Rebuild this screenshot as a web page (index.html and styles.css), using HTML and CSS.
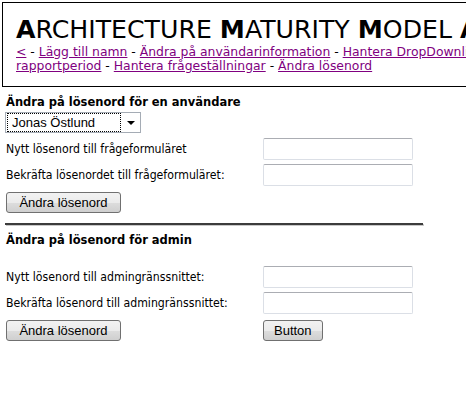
FILE: index.html
```html
<!DOCTYPE html>
<html lang="sv">
<head>
    <meta charset="UTF-8">
    <title>Ändra lösenord</title>
    <link rel="stylesheet" href="styles.css">
</head>
<body>
    <div class="header">
        <h1 class="title"><b>A</b>RCHITECTURE <b>M</b>ATURITY <b>M</b>ODEL <b>A</b>SSESSMENT</h1>
        <div class="menu">
            <a href="#">&lt;</a> - <a href="#">Lägg till namn</a> - <a href="#">Ändra på användarinformation</a> - <a href="#">Hantera DropDownlistor</a> - <a href="#">Hantera<br>rapportperiod</a> - <a href="#">Hantera frågeställningar</a> - <a href="#">Ändra lösenord</a>
        </div>
    </div>

    <div class="content">
        <h2 class="section-title first">Ändra på lösenord för en användare</h2>
        <div class="select">
            <span class="select-value">Jonas Östlund</span>
            <span class="select-arrow"></span>
        </div>
        <div class="form-grid">
            <label>Nytt lösenord till frågeformuläret</label>
            <input type="password" class="textbox">
            <label>Bekräfta lösenordet till frågeformuläret:</label>
            <input type="password" class="textbox">
        </div>
        <button type="button" class="btn btn-wide single">Ändra lösenord</button>

        <div class="divider"></div>

        <h2 class="section-title second">Ändra på lösenord för admin</h2>
        <div class="form-grid admin">
            <label>Nytt lösenord till admingränssnittet:</label>
            <input type="password" class="textbox">
            <label>Bekräfta lösenord till admingränssnittet:</label>
            <input type="password" class="textbox">
            <div><button type="button" class="btn btn-wide">Ändra lösenord</button></div>
            <div><button type="button" class="btn">Button</button></div>
        </div>
    </div>
</body>
</html>
```

FILE: styles.css
```css
body {
    margin: 0;
    background-color: #fff;
    color: #000;
    font-family: "DejaVu Sans", Verdana, sans-serif;
    font-size: 12px;
    line-height: 14px;
}

.header {
    margin: 2px 0 0 2px;
    border: 1px solid #000;
    padding: 12px 13px 13px 13px;
    width: 700px;
}

.title {
    margin: 0;
    font-size: 25.2px;
    line-height: 30px;
    font-weight: normal;
    white-space: nowrap;
}

.menu {
    font-size: 12.4px;
    white-space: nowrap;
}

.menu a {
    color: #800080;
}

.content {
    padding-left: 5px;
}

.section-title {
    margin: 0;
    font-size: 11.5px;
    line-height: 14px;
    font-weight: bold;
    padding-left: 1px;
}

.section-title.first {
    margin-top: 8px;
}

.section-title.second {
    margin-top: 8px;
}

.select {
    margin-top: 3px;
    width: 134px;
    height: 19px;
    border: 1px solid #a5acb5;
    display: flex;
    align-items: center;
    font-family: "Liberation Sans", Arial, sans-serif;
    font-size: 13px;
}

.select-value {
    flex: 1;
    height: 17px;
    line-height: 17px;
    margin-left: 1px;
    padding-left: 4px;
    border: 1px dotted #000;
}

.select-arrow {
    width: 0;
    height: 0;
    margin: 0 5px 0 6px;
    border-left: 4px solid transparent;
    border-right: 4px solid transparent;
    border-top: 4px solid #000;
}

.form-grid {
    display: grid;
    grid-template-columns: 257px 150px;
    row-gap: 4px;
    align-items: center;
    margin-top: 5px;
    padding-left: 1px;
    font-family: "DejaVu Sans Condensed", "DejaVu Sans", sans-serif;
    font-size: 12.2px;
}

.form-grid.admin {
    margin-top: 19px;
}

.form-grid.admin > div {
    margin-top: 2px;
}

.textbox {
    box-sizing: border-box;
    width: 150px;
    height: 22px;
    margin: 0;
    border: 1px solid #dbdfe6;
    border-top-color: #abadb3;
    border-radius: 2px;
    background-color: #fff;
}

.btn {
    box-sizing: border-box;
    height: 21px;
    padding: 0 10px;
    border: 1px solid #707070;
    border-radius: 3px;
    background: linear-gradient(#f2f2f2, #ebebeb 50%, #dddddd 50%, #cfcfcf);
    font-family: "Liberation Sans", Arial, sans-serif;
    font-size: 13px;
    color: #000;
}

.btn-wide {
    width: 115px;
}

.btn.single {
    margin-top: 6px;
    margin-left: 1px;
    display: block;
}

.divider {
    margin-top: 10px;
    width: 418px;
    height: 2px;
    background-color: #3c3c3c;
    box-shadow: 1px 1px 0 #c8c8c8;
}
```
